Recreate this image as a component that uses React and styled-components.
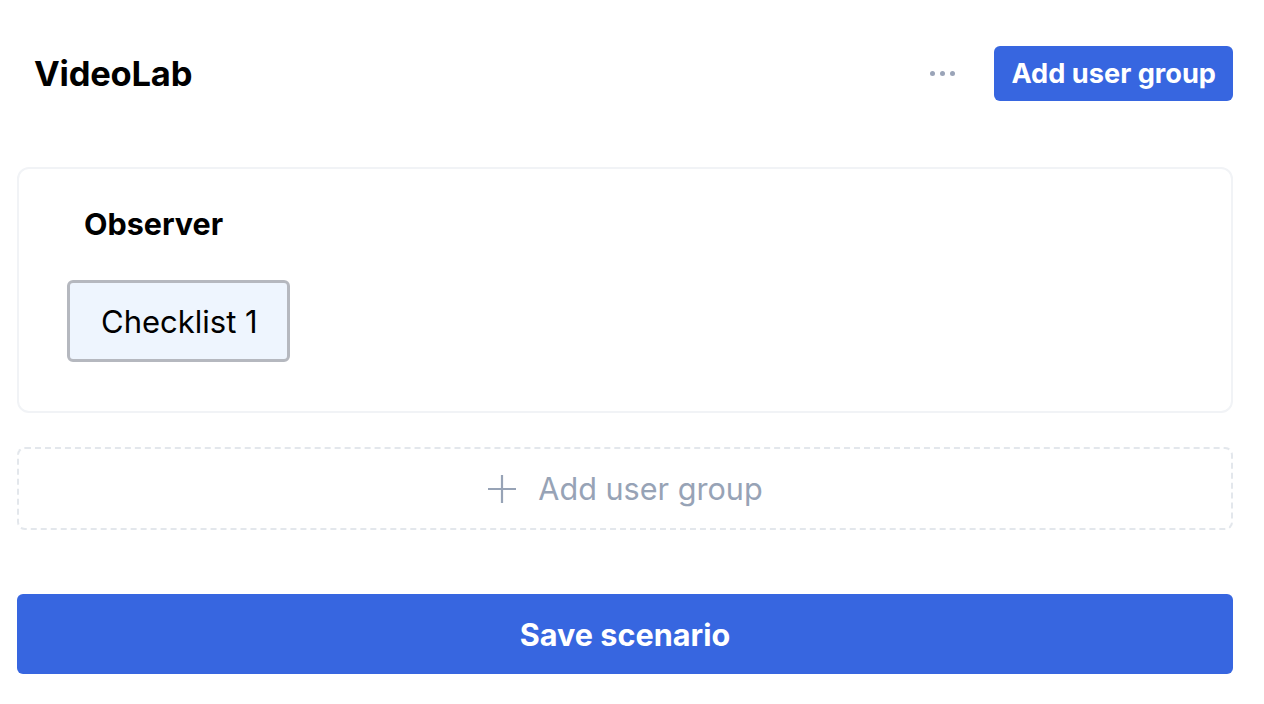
import React from 'react';
import styled, { createGlobalStyle } from 'styled-components';

const GlobalStyle = createGlobalStyle`
  html, body {
    margin: 0;
    padding: 0;
    background: #ffffff;
    font-family: Inter, "Liberation Sans", sans-serif;
    color: #000000;
  }
`;

const Page = styled.div`
  width: 1216px;
  margin-left: 17px;
  padding-top: 46px;
  display: flex;
  flex-direction: column;
`;

const Header = styled.header`
  display: flex;
  align-items: center;
  justify-content: space-between;
  height: 55px;
  padding-left: 17px;
`;

const Title = styled.h1`
  margin: 0;
  font-size: 34.5px;
  font-weight: 700;
  letter-spacing: -0.2px;
`;

const Actions = styled.div`
  display: flex;
  align-items: center;
  gap: 39px;
`;

const MoreButton = styled.button`
  display: flex;
  align-items: center;
  gap: 5px;
  padding: 0;
  border: none;
  background: none;
  cursor: pointer;
`;

const Dot = styled.span`
  width: 5px;
  height: 5px;
  border-radius: 50%;
  background: #9aa4b8;
`;

const PrimaryButton = styled.button`
  border: none;
  border-radius: 6px;
  background: #3766e0;
  color: #ffffff;
  font-family: inherit;
  font-weight: 700;
  font-size: ${(p) => (p.$wide ? '30.6px' : '27.2px')};
  height: ${(p) => (p.$wide ? '80px' : '55px')};
  width: ${(p) => (p.$wide ? '100%' : 'auto')};
  padding: 0 17px;
  cursor: pointer;
`;

const Card = styled.section`
  margin-top: 66px;
  height: 246px;
  box-sizing: border-box;
  border: 2px solid #f1f3f6;
  border-radius: 12px;
  padding: 37px 48px 0;
`;

const GroupName = styled.h2`
  margin: 0 0 0 17px;
  font-size: 30.5px;
  font-weight: 700;
  line-height: 36px;
`;

const ChecklistChip = styled.div`
  display: inline-flex;
  align-items: center;
  margin-top: 38px;
  height: 82px;
  box-sizing: border-box;
  padding: 0 29px 0 31px;
  background: #eef5fe;
  border: 3px solid #b5b8bf;
  border-radius: 6px;
  font-size: 31px;
`;

const AddGroupBox = styled.button`
  margin-top: 34px;
  height: 83px;
  width: 100%;
  display: flex;
  align-items: center;
  justify-content: center;
  gap: 21px;
  background: #ffffff;
  border: 2px dashed #e3e7ec;
  border-radius: 8px;
  color: #97a3b6;
  font-family: inherit;
  font-size: 30.6px;
  cursor: pointer;
`;

const SaveRow = styled.div`
  margin-top: 64px;
`;

function App() {
  return (
    <>
      <GlobalStyle />
      <Page>
        <Header>
          <Title>VideoLab</Title>
          <Actions>
            <MoreButton aria-label="More">
              <Dot />
              <Dot />
              <Dot />
            </MoreButton>
            <PrimaryButton>Add user group</PrimaryButton>
          </Actions>
        </Header>

        <Card>
          <GroupName>Observer</GroupName>
          <ChecklistChip>Checklist 1</ChecklistChip>
        </Card>

        <AddGroupBox>
          <svg width="30" height="30" viewBox="0 0 30 30" fill="none">
            <path d="M15 1v28M1 15h28" stroke="#97a3b6" strokeWidth="2.2" />
          </svg>
          Add user group
        </AddGroupBox>

        <SaveRow>
          <PrimaryButton $wide>Save scenario</PrimaryButton>
        </SaveRow>
      </Page>
    </>
  );
}

export default App;
